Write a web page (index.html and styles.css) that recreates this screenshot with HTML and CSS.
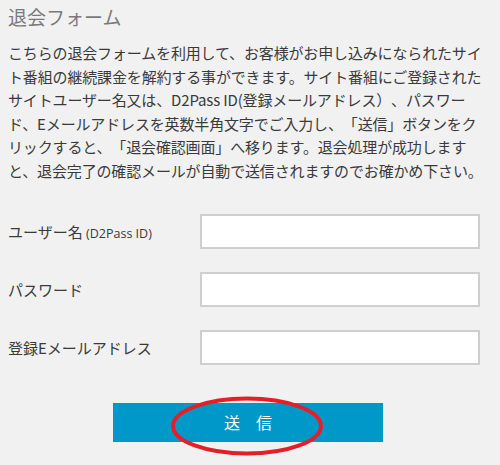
FILE: index.html
```html
<!DOCTYPE html>
<html lang="ja">
<head>
<meta charset="utf-8">
<link rel="stylesheet" href="styles.css">
</head>
<body>
<div class="page">
  <h1 class="title">退会フォーム</h1>
  <p class="intro">こちらの退会フォームを利用して、お客様がお申し込みになられたサイ<br>ト番組の継続課金を解約する事ができます。サイト番組にご登録された<br>サイトユーザー名又は、D2Pass ID(登録メールアドレス）、パスワー<br>ド、Eメールアドレスを英数半角文字でご入力し、「送信」ボタンをク<br>リックすると、「退会確認画面」へ移ります。退会処理が成功します<br>と、退会完了の確認メールが自動で送信されますのでお確かめ下さい。</p>
  <form class="form">
    <div class="row">
      <label class="label">ユーザー名 <span class="small">(D2Pass ID)</span></label>
      <input class="field" type="text">
    </div>
    <div class="row">
      <label class="label">パスワード</label>
      <input class="field" type="password">
    </div>
    <div class="row">
      <label class="label">登録Eメールアドレス</label>
      <input class="field" type="text">
    </div>
    <div class="actions">
      <button class="submit" type="button">送　信</button>
      <svg class="circle" width="160" height="66" viewBox="0 0 160 66"><ellipse cx="80" cy="33" rx="74" ry="27.5" fill="none" stroke="#e3202a" stroke-width="4"/></svg>
    </div>
  </form>
</div>
</body>
</html>
```
FILE: styles.css
```css
html, body {
  margin: 0;
  padding: 0;
  background: #f1f1f1;
}
body {
  font-family: "Noto Sans CJK JP", "Noto Sans", sans-serif;
  color: #3a3a3a;
}
.page {
  padding: 4px 8px 0 8px;
  width: 484px;
}
.title {
  margin: 0;
  font-size: 19px;
  font-weight: 400;
  color: #7a7a7a;
  line-height: 26px;
}
.intro {
  margin: 11px 0 0 0;
  font-size: 15px;
  line-height: 23.6px;
  letter-spacing: -0.15px;
  white-space: nowrap;
  text-spacing-trim: space-all;
}
.form {
  margin-top: 31px;
  display: flex;
  flex-direction: column;
}
.row {
  display: flex;
  align-items: center;
  height: 35px;
  margin-bottom: 23px;
}
.label {
  width: 192px;
  font-size: 15px;
  color: #3a3a3a;
}
.small {
  font-family: "Open Sans", "Noto Sans", sans-serif;
  font-size: 12.5px;
}
.field {
  box-sizing: border-box;
  width: 280px;
  height: 35px;
  margin: 0;
  border: 2px solid #cfcfcf;
  background: #fff;
  outline: none;
}
.actions {
  position: relative;
  margin-top: 15px;
  padding-left: 105px;
  height: 60px;
}
.submit {
  display: block;
  width: 270px;
  height: 39px;
  border: none;
  background: #0097c9;
  color: #fff;
  font-family: "Noto Sans CJK JP", sans-serif;
  font-size: 16px;
  padding: 0;
  margin: 0;
}
.circle {
  position: absolute;
  left: 159px;
  top: -10px;
}
```
